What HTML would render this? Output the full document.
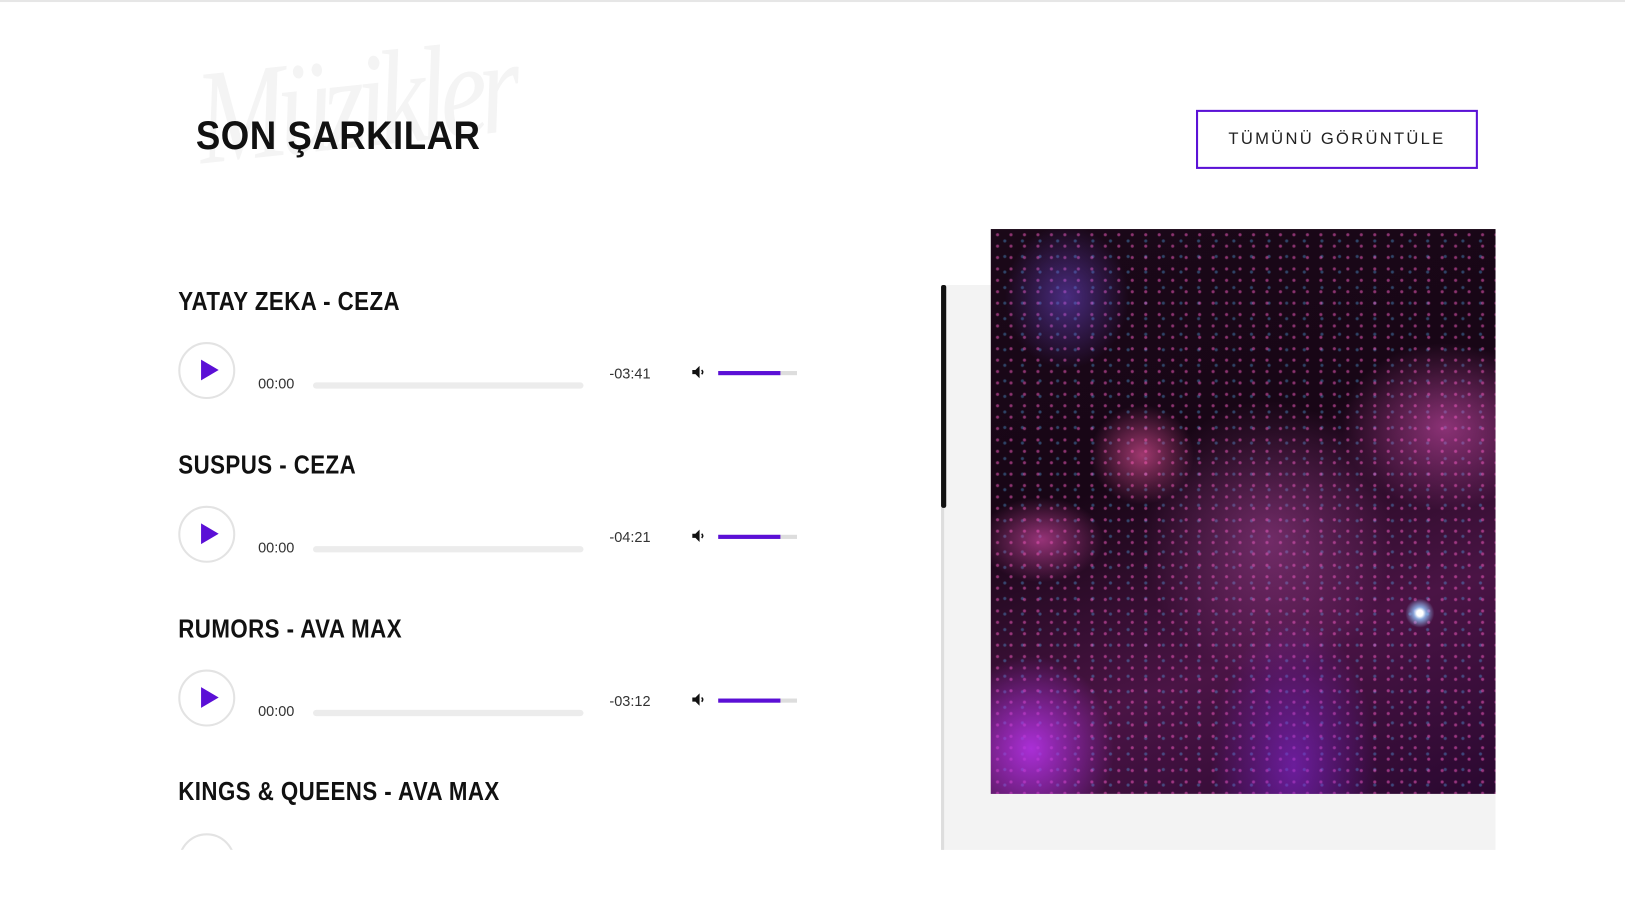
<!DOCTYPE html>
<html><head><meta charset="utf-8"><style>
*{margin:0;padding:0;box-sizing:border-box}
body{width:1625px;height:883px;background:#fff;position:relative;overflow:hidden;font-family:"Liberation Sans",sans-serif}
#w{position:absolute;left:0;top:0;width:1568px;height:852px;transform:scale(1.0364);transform-origin:0 0}
.top{position:absolute;left:0;top:0;width:1568px;height:2px;background:#e6e6e6}
.bg{position:absolute;left:190px;top:40px;font-family:"Liberation Serif",serif;font-style:italic;font-size:130px;color:#f4f4f4;letter-spacing:-10px;transform:rotate(-6deg) scaleX(.8);transform-origin:left}
h1{position:absolute;left:189px;top:111px;font-size:38px;font-weight:bold;color:#111;transform:scaleX(.93);transform-origin:left;letter-spacing:.5px}
.btn{position:absolute;left:1154px;top:106px;width:272px;height:57px;border:2px solid #5b12d6;font-size:16px;letter-spacing:2.2px;color:#222;text-align:center;line-height:53px}
.panel{position:absolute;left:908px;top:275px;width:535px;height:545px;background:#f3f3f3}
.sb{position:absolute;left:908px;top:275px;width:5px;height:215px;background:#111;border-radius:2px}
.sbt{position:absolute;left:908px;top:490px;width:3px;height:330px;background:#ddd}
.img{position:absolute;left:956px;top:221px;width:487px;height:545px;background:
radial-gradient(circle at 85% 68%,#ffffff 0 3px,rgba(150,200,255,.8) 6px,transparent 14px),
radial-gradient(ellipse at 10% 55%,rgba(230,80,180,.6),transparent 60px),
radial-gradient(ellipse at 30% 40%,rgba(250,90,170,.6),transparent 50px),
radial-gradient(ellipse at 8% 92%,rgba(180,50,230,.9),transparent 80px),
radial-gradient(ellipse at 60% 95%,rgba(140,40,220,.6),transparent 80px),
radial-gradient(ellipse at 90% 35%,rgba(240,90,200,.5),transparent 100px),
radial-gradient(ellipse at 55% 55%,rgba(210,90,190,.4),transparent 120px),
radial-gradient(ellipse at 15% 12%,rgba(120,80,230,.5),transparent 60px),
radial-gradient(circle,rgba(255,95,200,.5) 1px,transparent 2px) 0 0/13px 11px,
radial-gradient(circle,rgba(87,184,255,.35) 1px,transparent 2px) 5px 4px/17px 15px,
linear-gradient(160deg,#1a0818,#180616 40%,#4a1445 70%,#2a0830)}
.title{position:absolute;left:172px;font-size:25px;font-weight:bold;color:#111;transform:scaleX(.86);transform-origin:left;letter-spacing:.5px}
.play{position:absolute;left:172px;width:55px;height:55px;border:2px solid #e3e3e3;border-radius:50%}
.play:after{content:"";position:absolute;left:20px;top:15px;border-left:17px solid #5b0fd6;border-top:10px solid transparent;border-bottom:10px solid transparent}
.t0{position:absolute;left:249px;font-size:14px;color:#333}
.bar{position:absolute;left:302px;width:261px;height:6px;background:#ececec;border-radius:3px}
.t1{position:absolute;left:588px;font-size:14px;color:#333}
.spk{position:absolute;left:667px}
.vol{position:absolute;left:693px;width:76px;height:4px;background:#ddd}
.vol i{display:block;width:60px;height:4px;background:#5b0fd6}
.cut{position:absolute;left:0;top:820px;width:900px;height:63px;background:#fff}
</style></head><body><div id="w">
<div class="top"></div>
<div class="bg">Müzikler</div>
<h1>SON ŞARKILAR</h1>
<div class="btn">TÜMÜNÜ GÖRÜNTÜLE</div>
<div class="panel"></div><div class="sbt"></div><div class="sb"></div>
<div class="img"></div>

<div class="title" style="top:277px">YATAY ZEKA - CEZA</div>
<div class="play" style="top:330px"></div>
<div class="t0" style="top:362px">00:00</div><div class="bar" style="top:369px"></div>
<div class="t1" style="top:352px">-03:41</div>
<svg class="spk" style="top:352px" width="14" height="14" viewBox="0 0 14 14"><path d="M1 5h3l4-4v12l-4-4H1z" fill="#111"/><path d="M10 5q2 2 0 4" stroke="#111" fill="none" stroke-width="1.5"/></svg>
<div class="vol" style="top:358px"><i></i></div>

<div class="title" style="top:435px">SUSPUS - CEZA</div>
<div class="play" style="top:488px"></div>
<div class="t0" style="top:520px">00:00</div><div class="bar" style="top:527px"></div>
<div class="t1" style="top:510px">-04:21</div>
<svg class="spk" style="top:510px" width="14" height="14" viewBox="0 0 14 14"><path d="M1 5h3l4-4v12l-4-4H1z" fill="#111"/><path d="M10 5q2 2 0 4" stroke="#111" fill="none" stroke-width="1.5"/></svg>
<div class="vol" style="top:516px"><i></i></div>

<div class="title" style="top:593px">RUMORS - AVA MAX</div>
<div class="play" style="top:646px"></div>
<div class="t0" style="top:678px">00:00</div><div class="bar" style="top:685px"></div>
<div class="t1" style="top:668px">-03:12</div>
<svg class="spk" style="top:668px" width="14" height="14" viewBox="0 0 14 14"><path d="M1 5h3l4-4v12l-4-4H1z" fill="#111"/><path d="M10 5q2 2 0 4" stroke="#111" fill="none" stroke-width="1.5"/></svg>
<div class="vol" style="top:674px"><i></i></div>

<div class="title" style="top:750px">KINGS &amp; QUEENS - AVA MAX</div>
<div class="play" style="top:804px"></div>
<div class="cut"></div>
</div></body></html>
